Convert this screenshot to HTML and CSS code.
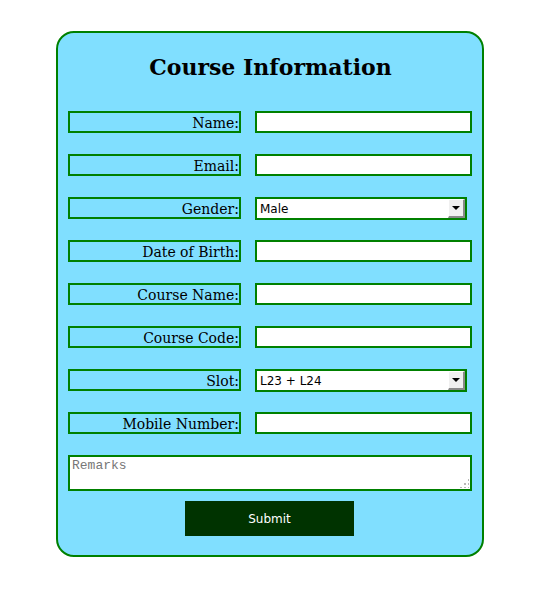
FILE: index.html
```html
<!DOCTYPE html>
<html>
<head>
<meta charset="utf-8">
<link rel="stylesheet" href="styles.css">
</head>
<body>
<form class="card">
  <h1 class="title">Course Information</h1>
  <div class="rows">
    <div class="row"><label class="lbl">Name:</label><input class="field" type="text"></div>
    <div class="row"><label class="lbl">Email:</label><input class="field" type="text"></div>
    <div class="row"><label class="lbl">Gender:</label>
      <span class="selwrap"><select class="sel"><option>Male</option><option>Female</option></select><span class="arrow"><span class="tri"></span></span></span>
    </div>
    <div class="row"><label class="lbl">Date of Birth:</label><input class="field" type="text"></div>
    <div class="row"><label class="lbl">Course Name:</label><input class="field" type="text"></div>
    <div class="row"><label class="lbl">Course Code:</label><input class="field" type="text"></div>
    <div class="row"><label class="lbl">Slot:</label>
      <span class="selwrap"><select class="sel"><option>L23 + L24</option></select><span class="arrow"><span class="tri"></span></span></span>
    </div>
    <div class="row"><label class="lbl">Mobile Number:</label><input class="field" type="text"></div>
  </div>
  <div class="tawrap">
    <textarea class="remarks" placeholder="Remarks"></textarea>
    <span class="grip"></span>
  </div>
  <div class="actions"><button class="submit" type="button">Submit</button></div>
</form>
</body>
</html>
```
FILE: styles.css
```css
html, body { margin: 0; padding: 0; background: #fff; }
body { padding: 31px 0 0 56px; }

.card {
  box-sizing: border-box;
  width: 428px;
  height: 526px;
  background: #80dfff;
  border: 2px solid #008000;
  border-radius: 18px;
  padding: 0 9px 0 10px;
  display: flex;
  flex-direction: column;
}

.title {
  margin: 0;
  height: 78px;
  padding-top: 19px;
  box-sizing: border-box;
  text-align: center;
  font-family: "DejaVu Serif", serif;
  font-weight: bold;
  font-size: 22px;
  line-height: 30px;
  color: #000;
}

.rows { display: flex; flex-direction: column; gap: 21px; }

.row { display: flex; align-items: flex-start; gap: 14px; height: 22px; }

.lbl {
  box-sizing: border-box;
  width: 173px;
  height: 22px;
  border: 2px solid #008000;
  text-align: right;
  font-family: "DejaVu Serif", serif;
  font-size: 14px;
  line-height: 20px;
  color: #000;
}

.field {
  box-sizing: border-box;
  width: 217px;
  height: 22px;
  border: 2px solid #008000;
  background: #fff;
  margin: 0;
  padding: 0 3px;
  outline: none;
}

.selwrap { position: relative; display: block; width: 212px; height: 23px; }

.sel {
  appearance: none;
  -webkit-appearance: none;
  box-sizing: border-box;
  width: 212px;
  height: 23px;
  border: 2px solid #008000;
  border-radius: 0;
  background: #fff;
  margin: 0;
  padding: 0 0 0 3px;
  font-family: "DejaVu Sans", sans-serif;
  font-size: 12px;
  color: #000;
  outline: none;
}

.arrow {
  position: absolute;
  right: 2px;
  top: 2px;
  box-sizing: border-box;
  width: 17px;
  height: 19px;
  background: #f0f0f0;
  border-top: 1px solid #fff;
  border-left: 1px solid #fff;
  border-right: 2px solid #8a8a8a;
  border-bottom: 2px solid #8a8a8a;
  display: flex;
  align-items: center;
  justify-content: center;
  pointer-events: none;
}

.tri {
  width: 0; height: 0;
  border-left: 4px solid transparent;
  border-right: 4px solid transparent;
  border-top: 4px solid #000;
}

.tawrap { position: relative; width: 404px; height: 36px; margin-top: 21px; }

.remarks {
  box-sizing: border-box;
  width: 404px;
  height: 36px;
  margin: 0;
  border: 2px solid #008000;
  background: #fff;
  padding: 1px 2px;
  font-family: "Liberation Mono", monospace;
  font-size: 13px;
  resize: none;
  outline: none;
  display: block;
}
.remarks::placeholder { color: #777; }

.grip {
  position: absolute;
  right: 3px;
  bottom: 3px;
  width: 10px;
  height: 10px;
  background:
    radial-gradient(circle, #b8b8b8 1.4px, transparent 1.5px) 0 0 / 4px 4px;
  clip-path: polygon(100% 0, 100% 100%, 0 100%);
  pointer-events: none;
}

.actions { display: flex; padding-left: 117px; margin-top: 10px; }

.submit {
  width: 169px;
  height: 35px;
  background: #003300;
  color: #fff;
  border: none;
  border-radius: 0;
  font-family: "DejaVu Sans", sans-serif;
  font-size: 12px;
  padding: 0;
  margin: 0;
}
```
